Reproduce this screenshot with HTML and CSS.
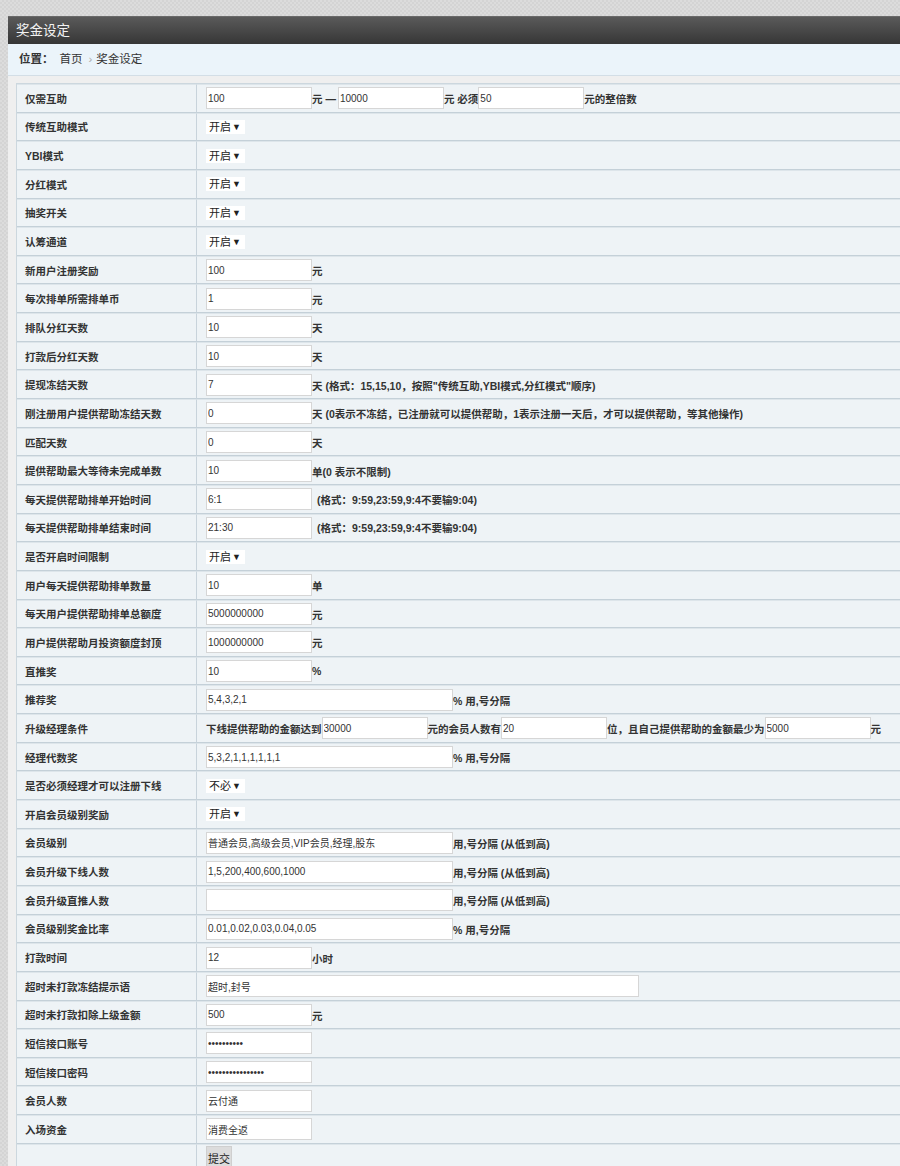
FILE: index.html
```html
<!DOCTYPE html>
<html lang="zh-CN">
<head>
<meta charset="utf-8">
<title>奖金设定</title>
<link rel="stylesheet" href="styles.css">
</head>
<body>
<div class="panel">
  <div class="panel-head">奖金设定</div>
  <div class="crumb"><b>位置：</b><span class="crumb-link">首页</span><span class="crumb-sep">›</span><span class="crumb-link">奖金设定</span></div>
  <div class="panel-body">
    <table class="form-table">
      <colgroup><col class="col-label"><col class="col-field"></colgroup>
      <tr><td class="label">仅需互助</td><td class="field"><input class="inp" value="100"><span class="t-light">元 —</span><input class="inp" value="10000"><span class="t">元 必须</span><input class="inp" value="50"><span class="t">元的整倍数</span></td></tr>
      <tr><td class="label">传统互助模式</td><td class="field"><span class="sel"><select><option>开启</option></select></span></td></tr>
      <tr><td class="label">YBI模式</td><td class="field"><span class="sel"><select><option>开启</option></select></span></td></tr>
      <tr><td class="label">分红模式</td><td class="field"><span class="sel"><select><option>开启</option></select></span></td></tr>
      <tr><td class="label">抽奖开关</td><td class="field"><span class="sel"><select><option>开启</option></select></span></td></tr>
      <tr><td class="label">认筹通道</td><td class="field"><span class="sel"><select><option>开启</option></select></span></td></tr>
      <tr><td class="label">新用户注册奖励</td><td class="field"><input class="inp" value="100"><span class="t">元</span></td></tr>
      <tr><td class="label">每次排单所需排单币</td><td class="field"><input class="inp" value="1"><span class="t">元</span></td></tr>
      <tr><td class="label">排队分红天数</td><td class="field"><input class="inp" value="10"><span class="t">天</span></td></tr>
      <tr><td class="label">打款后分红天数</td><td class="field"><input class="inp" value="10"><span class="t">天</span></td></tr>
      <tr><td class="label">提现冻结天数</td><td class="field"><input class="inp" value="7"><span class="t">天 (格式：15,15,10，按照"传统互助,YBI模式,分红模式"顺序)</span></td></tr>
      <tr><td class="label">刚注册用户提供帮助冻结天数</td><td class="field"><input class="inp" value="0"><span class="t">天 (0表示不冻结，已注册就可以提供帮助，1表示注册一天后，才可以提供帮助，等其他操作)</span></td></tr>
      <tr><td class="label">匹配天数</td><td class="field"><input class="inp" value="0"><span class="t">天</span></td></tr>
      <tr><td class="label">提供帮助最大等待未完成单数</td><td class="field"><input class="inp" value="10"><span class="t">单(0 表示不限制)</span></td></tr>
      <tr><td class="label">每天提供帮助排单开始时间</td><td class="field"><input class="inp" value="6:1"><span class="t gap">(格式：9:59,23:59,9:4不要输9:04)</span></td></tr>
      <tr><td class="label">每天提供帮助排单结束时间</td><td class="field"><input class="inp" value="21:30"><span class="t gap">(格式：9:59,23:59,9:4不要输9:04)</span></td></tr>
      <tr><td class="label">是否开启时间限制</td><td class="field"><span class="sel"><select><option>开启</option></select></span></td></tr>
      <tr><td class="label">用户每天提供帮助排单数量</td><td class="field"><input class="inp" value="10"><span class="t">单</span></td></tr>
      <tr><td class="label">每天用户提供帮助排单总额度</td><td class="field"><input class="inp" value="5000000000"><span class="t">元</span></td></tr>
      <tr><td class="label">用户提供帮助月投资额度封顶</td><td class="field"><input class="inp" value="1000000000"><span class="t">元</span></td></tr>
      <tr><td class="label">直推奖</td><td class="field"><input class="inp" value="10"><span class="t">%</span></td></tr>
      <tr><td class="label">推荐奖</td><td class="field"><input class="inp wide" value="5,4,3,2,1"><span class="t">% 用,号分隔</span></td></tr>
      <tr><td class="label">升级经理条件</td><td class="field"><span class="t">下线提供帮助的金额达到</span><input class="inp" value="30000"><span class="t">元的会员人数有</span><input class="inp" value="20"><span class="t">位，且自己提供帮助的金额最少为</span><input class="inp" value="5000"><span class="t">元</span></td></tr>
      <tr><td class="label">经理代数奖</td><td class="field"><input class="inp wide" value="5,3,2,1,1,1,1,1,1"><span class="t">% 用,号分隔</span></td></tr>
      <tr><td class="label">是否必须经理才可以注册下线</td><td class="field"><span class="sel"><select><option>不必</option></select></span></td></tr>
      <tr><td class="label">开启会员级别奖励</td><td class="field"><span class="sel"><select><option>开启</option></select></span></td></tr>
      <tr><td class="label">会员级别</td><td class="field"><input class="inp wide" value="普通会员,高级会员,VIP会员,经理,股东"><span class="t">用,号分隔 (从低到高)</span></td></tr>
      <tr><td class="label">会员升级下线人数</td><td class="field"><input class="inp wide" value="1,5,200,400,600,1000"><span class="t">用,号分隔 (从低到高)</span></td></tr>
      <tr><td class="label">会员升级直推人数</td><td class="field"><input class="inp wide" value=""><span class="t">用,号分隔 (从低到高)</span></td></tr>
      <tr><td class="label">会员级别奖金比率</td><td class="field"><input class="inp wide" value="0.01,0.02,0.03,0.04,0.05"><span class="t">% 用,号分隔</span></td></tr>
      <tr><td class="label">打款时间</td><td class="field"><input class="inp" value="12"><span class="t">小时</span></td></tr>
      <tr><td class="label">超时未打款冻结提示语</td><td class="field"><input class="inp xwide" value="超时,封号"></td></tr>
      <tr><td class="label">超时未打款扣除上级金额</td><td class="field"><input class="inp" value="500"><span class="t">元</span></td></tr>
      <tr><td class="label">短信接口账号</td><td class="field"><input class="inp" type="password" value="abcdefghij"></td></tr>
      <tr><td class="label">短信接口密码</td><td class="field"><input class="inp" type="password" value="abcdefghijklmnop"></td></tr>
      <tr><td class="label">会员人数</td><td class="field"><input class="inp" value="云付通"></td></tr>
      <tr><td class="label">入场资金</td><td class="field"><input class="inp" value="消费全返"></td></tr>
      <tr class="submit-row"><td class="label"></td><td class="field"><button class="btn" type="submit">提交</button></td></tr>
    </table>
  </div>
</div>
</body>
</html>
```
FILE: styles.css
```css
html, body {
  margin: 0;
  padding: 0;
}
body {
  padding: 16px 0 0 8px;
  overflow: hidden;
  background-color: #d8d8d8;
  background-image: repeating-conic-gradient(#d4d4d4 0 25%, #dcdcdc 0 50%);
  background-size: 4px 4px;
  font-family: "Liberation Sans", "Noto Sans CJK SC", sans-serif;
  font-size: 12px;
  color: #333;
}
.panel {
  background: #efefef;
  min-height: 1200px;
}
.panel-head {
  height: 28px;
  line-height: 28px;
  padding-left: 8px;
  background: linear-gradient(#5a5a5a, #363636);
  border-top: 1px solid #6a6a6a;
  box-sizing: border-box;
  color: #f2f2f2;
  font-size: 13.5px;
}
.crumb {
  height: 32px;
  line-height: 31px;
  padding-left: 11px;
  background: #ebf4fa;
  border-bottom: 1px solid #d3dee6;
  box-sizing: border-box;
  color: #333;
  font-size: 11.5px;
}
.crumb b {
  font-weight: bold;
  margin-right: 6px;
}
.crumb-sep {
  color: #aaa;
  margin: 0 4px 0 6px;
}
.panel-body {
  padding: 7px 0 0 8px;
}
.form-table {
  border-collapse: separate;
  border-spacing: 0;
  table-layout: fixed;
  width: 100%;
  background: #eef3f6;
  border-left: 1px solid #ccd7de;
  border-top: 1px solid #ccd7de;
  font-size: 10.5px;
}
.col-label {
  width: 180px;
}
.form-table td {
  height: 26.65px;
  padding: 0;
  border-top: 1px solid #dde5ea;
  border-bottom: 1px solid #c4d0d8;
  vertical-align: middle;
  white-space: nowrap;
  overflow: visible;
}
.label {
  padding-left: 8px !important;
  border-right: 1px solid #c8d3db;
  font-weight: bold;
  color: #333;
}
.field {
  padding-left: 9px !important;
}
.inp {
  box-sizing: border-box;
  width: 106px;
  height: 22px;
  margin: 0;
  padding: 0 1px;
  border: 1px solid #d6d6d6;
  background: #fff;
  font-family: "Liberation Sans", "Noto Sans CJK SC", sans-serif;
  font-size: 10px;
  color: #333;
  vertical-align: middle;
  outline: none;
}
.inp.wide {
  width: 247px;
}
.inp.xwide {
  width: 433px;
}
.t, .t-light {
  font-weight: bold;
  vertical-align: middle;
  color: #333;
}
.t-light {
  margin-right: 2px;
}
.gap {
  margin-left: 5px;
}
.sel {
  position: relative;
  display: inline-block;
  vertical-align: middle;
  background: #fff;
  width: 39px;
  height: 14px;
}
.sel select {
  appearance: none;
  -webkit-appearance: none;
  border: none;
  background: transparent;
  width: 39px;
  height: 14px;
  padding: 0 0 0 3px;
  margin: 0;
  font-family: "Liberation Sans", "Noto Sans CJK SC", sans-serif;
  font-size: 11px;
  line-height: 14px;
  color: #222;
  outline: none;
}
.sel::after {
  content: "▼";
  position: absolute;
  right: 4px;
  top: 2px;
  font-size: 9px;
  line-height: 10px;
  color: #222;
  pointer-events: none;
}
.submit-row td {
  height: 40px;
  vertical-align: top;
}
.btn {
  margin-top: 1px;
  padding: 3px 1px 6px;
  background: #dcdcdc;
  border: 1px solid #cfcfcf;
  font-family: "Liberation Sans", "Noto Sans CJK SC", sans-serif;
  font-size: 11px;
  color: #222;
}
```
